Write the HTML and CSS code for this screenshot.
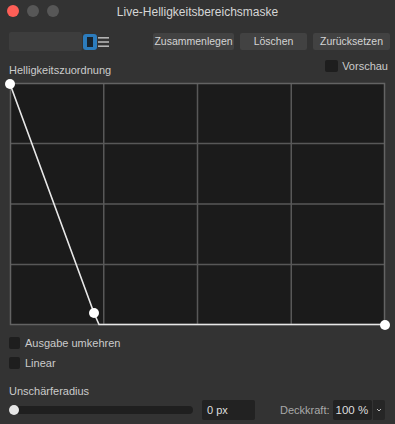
FILE: index.html
```html
<!DOCTYPE html>
<html lang="de">
<head>
    <meta charset="UTF-8">
    <title>Live-Helligkeitsbereichsmaske</title>
    <link rel="stylesheet" href="styles.css">
</head>
<body>
    <div class="window">
        <div class="titlebar">
            <div class="lights">
                <span class="light red"></span>
                <span class="light"></span>
                <span class="light"></span>
            </div>
            <div class="title">Live-Helligkeitsbereichsmaske</div>
        </div>

        <div class="toolbar">
            <div class="field"></div>
            <svg class="blend-icon" width="16" height="18" viewBox="0 0 16 18">
                <path d="M1.5 6 L3 4.5 L4.5 6 M1.5 12 L3 13.5 L4.5 12" stroke="#b8b8b8" stroke-width="1" fill="none"/>
                <rect x="1" y="1" width="14" height="16" rx="3" fill="#2c7cbd"/>
                <rect x="5" y="4" width="6" height="10" fill="#18232d"/>
            </svg>
            <svg class="menu-icon" width="11" height="18" viewBox="0 0 11 18">
                <rect x="0" y="4" width="11" height="1.6" fill="#b4b4b4"/>
                <rect x="0" y="8.2" width="11" height="1.6" fill="#b4b4b4"/>
                <rect x="0" y="12.4" width="11" height="1.6" fill="#b4b4b4"/>
            </svg>
            <div class="buttons">
                <button class="btn merge">Zusammenlegen</button>
                <button class="btn clear">Löschen</button>
                <button class="btn reset">Zurücksetzen</button>
            </div>
        </div>

        <div class="head">
            <span class="label">Helligkeitszuordnung</span>
            <label class="check preview"><span class="box"></span>Vorschau</label>
        </div>

        <svg class="graph" width="375" height="242" viewBox="0 0 375 242">
            <rect x="0" y="0" width="375" height="242" fill="#1b1b1b"/>
            <g stroke="#585858" stroke-width="1.5">
                <line x1="93.75" y1="0" x2="93.75" y2="242"/>
                <line x1="187.5" y1="0" x2="187.5" y2="242"/>
                <line x1="281.25" y1="0" x2="281.25" y2="242"/>
                <line x1="0" y1="60.5" x2="375" y2="60.5"/>
                <line x1="0" y1="121" x2="375" y2="121"/>
                <line x1="0" y1="181.5" x2="375" y2="181.5"/>
            </g>
            <rect x="0.5" y="0.5" width="374" height="241" fill="none" stroke="#636363" stroke-width="1.5"/>
            <polyline points="0,1 84,230 89,241.5 375,241.5" fill="none" stroke="#e8e8e8" stroke-width="1.6"/>
            <circle cx="0" cy="1" r="5" fill="#ffffff"/>
            <circle cx="84" cy="230" r="5" fill="#ffffff"/>
            <circle cx="375" cy="242" r="5" fill="#ffffff"/>
        </svg>

        <label class="check first"><span class="box"></span>Ausgabe umkehren</label>
        <label class="check second"><span class="box"></span>Linear</label>

        <div class="label blur">Unschärferadius</div>

        <div class="bottom">
            <div class="slider"><span class="knob"></span></div>
            <div class="input radius">0 px</div>
            <span class="label opacity">Deckkraft:</span>
            <div class="combo">
                <div class="input value">100 %</div>
                <div class="chevron">
                    <svg width="12" height="20" viewBox="0 0 12 20">
                        <path d="M4 9 L6 11 L8 9" stroke="#bdbdbd" stroke-width="1" fill="none"/>
                    </svg>
                </div>
            </div>
        </div>
    </div>
</body>
</html>
```

FILE: styles.css
```css
body {
    margin: 0;
    background: #333333;
    font-family: 'Liberation Sans', Arial, sans-serif;
    color: #cdcdcd;
}
.window {
    width: 395px;
    height: 424px;
    overflow: hidden;
}
.titlebar {
    height: 22px;
    position: relative;
    display: flex;
    align-items: center;
    justify-content: center;
}
.lights {
    position: absolute;
    left: 7px;
    top: 5px;
    display: flex;
    gap: 8px;
}
.light {
    width: 12px;
    height: 12px;
    border-radius: 50%;
    background: #575757;
}
.light.red {
    background: #fe5f57;
}
.title {
    font-size: 12px;
    color: #d6d6d6;
    padding-top: 1px;
}
.toolbar {
    margin-top: 10px;
    height: 19px;
    display: flex;
    align-items: center;
    padding: 0 5px 0 9px;
}
.field {
    width: 73px;
    height: 19px;
    background: #3d3d3d;
    border-radius: 2px;
}
.blend-icon {
    display: block;
}
.menu-icon {
    display: block;
}
.buttons {
    margin-left: auto;
    display: flex;
    gap: 6px;
}
.btn {
    height: 17px;
    padding: 0;
    border: none;
    border-radius: 2px;
    background: #424242;
    color: #d4d4d4;
    font-family: 'Liberation Sans', Arial, sans-serif;
    font-size: 10.5px;
    line-height: 17px;
}
.btn.merge {
    width: 81px;
}
.btn.clear {
    width: 67px;
}
.btn.reset {
    width: 77px;
}
.label {
    font-size: 11px;
    line-height: 14px;
    color: #cbcbcb;
}
.head {
    margin-top: 9px;
    height: 23px;
    padding: 0 7px 0 9px;
    display: flex;
    justify-content: space-between;
    align-items: flex-start;
}
.head .label {
    margin-top: 3px;
}
.check {
    display: flex;
    align-items: center;
    gap: 4px;
    font-size: 11px;
    line-height: 12px;
    color: #cbcbcb;
}
.box {
    width: 12px;
    height: 12px;
    border-radius: 2px;
    background: #1e1e1e;
}
.preview .box {
    width: 13px;
}
.graph {
    display: block;
    margin-left: 10px;
    overflow: visible;
}
.check.first {
    margin: 12px 0 0 9px;
}
.check.second {
    margin: 8px 0 0 9px;
}
.check.first .box,
.check.second .box {
    width: 11px;
    height: 12px;
}
.check.first,
.check.second {
    gap: 5px;
}
.blur {
    margin: 15px 0 0 9px;
}
.bottom {
    margin-top: 2px;
    height: 20px;
    display: flex;
    align-items: center;
    padding-left: 9px;
}
.slider {
    width: 184px;
    height: 8px;
    border-radius: 4px;
    background: #1f1f1f;
    position: relative;
}
.knob {
    position: absolute;
    left: 0;
    top: -1px;
    width: 10px;
    height: 10px;
    border-radius: 50%;
    background: #e6e6e6;
}
.input {
    height: 20px;
    line-height: 20px;
    background: #222222;
    border-radius: 2px;
    font-size: 11px;
    color: #dedede;
    box-sizing: border-box;
}
.radius {
    width: 53px;
    margin-left: 9px;
    padding-left: 5px;
}
.opacity {
    margin-left: 25px;
    color: #a9a9a9;
}
.combo {
    margin-left: 3px;
    display: flex;
    gap: 1px;
}
.value {
    width: 39px;
    padding-left: 3px;
    font-size: 11.5px;
}
.chevron {
    width: 12px;
    height: 20px;
    background: #262626;
    border-radius: 0 2px 2px 0;
}
.chevron svg {
    display: block;
}
```
